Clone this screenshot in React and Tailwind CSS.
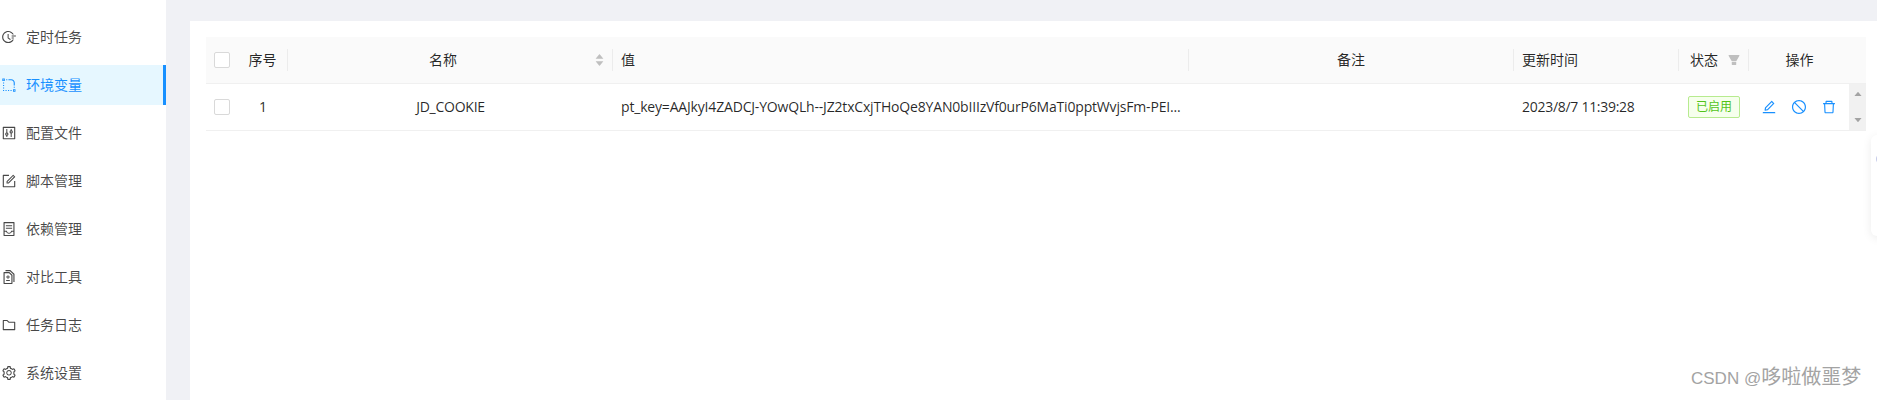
import React from "react";
import {
  AiOutlineFieldTime, AiOutlineRadiusSetting, AiOutlineControl, AiOutlineForm,
  AiOutlineContainer, AiOutlineDiff, AiOutlineFolder, AiOutlineSetting,
  AiOutlineEdit, AiOutlineStop, AiOutlineDelete, AiFillFilter, AiFillCaretUp, AiFillCaretDown,
} from "react-icons/ai";

const menu = [
  [AiOutlineFieldTime, "定时任务"],
  [AiOutlineRadiusSetting, "环境变量", true],
  [AiOutlineControl, "配置文件"],
  [AiOutlineForm, "脚本管理"],
  [AiOutlineContainer, "依赖管理"],
  [AiOutlineDiff, "对比工具"],
  [AiOutlineFolder, "任务日志"],
  [AiOutlineSetting, "系统设置"],
];

const Divider = () => <span className="w-px h-[22px] bg-[#ececec] shrink-0" />;
const Checkbox = () => <span className="block w-4 h-4 rounded-[2px] border border-[#d9d9d9] bg-white" />;

function Head({ children, center, divider = true, extra, pad = "" }) {
  return (
    <div className="flex items-center min-w-0">
      <div className={`flex-1 flex items-center min-w-0 ${center ? "justify-center" : "pl-2"} ${pad}`}>{children}</div>
      {extra}
      {divider && <Divider />}
    </div>
  );
}

export default function App() {
  return (
    <div className="relative flex h-[400px] w-[1877px] overflow-hidden bg-[#f0f1f5] text-sm text-[rgba(0,0,0,0.85)] font-['Open_Sans','Noto_Sans_CJK_SC',sans-serif]">
      <aside className="w-[166px] h-full shrink-0 bg-white pt-[17px] flex flex-col gap-2 text-[rgba(0,0,0,0.72)]">
        {menu.map(([Icon, label, active]) => (
          <div
            key={label}
            className={`h-10 flex items-center pl-[1px] gap-[9px] ${active ? "bg-[#e6f7ff] text-[#1890ff] border-r-[3px] border-[#1890ff]" : ""}`}
          >
            <Icon className="w-4 h-4 shrink-0" />
            <span>{label}</span>
          </div>
        ))}
      </aside>
      <main className="flex-1 pt-[21px] pl-6">
        <div className="h-full bg-white pt-4 pl-4 pr-[11px]">
          <div className="grid grid-cols-[32px_50px_325px_576px_325px_165px_70px_117px] h-[47px] bg-[#fafafa] border-b border-[#f0f0f0]">
            <div className="flex items-center pl-2"><Checkbox /></div>
            <Head center>序号</Head>
            <Head center pad="pl-1" extra={
              <span className="flex flex-col mr-[7px] text-[#bfbfbf] -space-y-[4px]">
                <AiFillCaretUp className="w-[11px] h-[11px]" />
                <AiFillCaretDown className="w-[11px] h-[11px]" />
              </span>
            }>名称</Head>
            <Head>值</Head>
            <Head center>备注</Head>
            <Head>更新时间</Head>
            <Head extra={<AiFillFilter className="w-[14px] h-[14px] mr-[7px] text-[#bfbfbf]" />}><span className="pl-[3px]">状态</span></Head>
            <Head center divider={false} pad="pr-4">操作</Head>
          </div>
          <div className="grid grid-cols-[32px_50px_325px_576px_325px_165px_70px_117px] h-[47px] border-b border-[#f0f0f0]">
            <div className="flex items-center pl-2"><Checkbox /></div>
            <div className="flex items-center justify-center">1</div>
            <div className="flex items-center justify-center tracking-[-0.25px]">JD_COOKIE</div>
            <div className="flex items-center pl-2 min-w-0 tracking-[-0.18px]"><span className="truncate">pt_key=AAJkyI4ZADCJ-YOwQLh--JZ2txCxjTHoQe8YAN0bIIIzVf0urP6MaTi0pptWvjsFm-PEI...</span></div>
            <div />
            <div className="flex items-center pl-2 tracking-[-0.28px]">2023/8/7 11:39:28</div>
            <div className="flex items-center pl-[9px]">
              <span className="w-[52px] h-[22px] flex items-center justify-center rounded-[2px] border border-[#b7eb8f] bg-[#f6ffed] text-xs text-[#52c41a]">已启用</span>
            </div>
            <div className="flex items-center">
              <div className="flex-1 flex items-center pl-3 gap-[14px] text-[#1890ff]">
                <AiOutlineEdit className="w-4 h-4" />
                <AiOutlineStop className="w-4 h-4" />
                <AiOutlineDelete className="w-4 h-4" />
              </div>
              <div className="w-[17px] h-full bg-[#f1f1f1] flex flex-col items-center justify-between py-[5px] text-[#a3a3a3]">
                <AiFillCaretUp className="w-[10px] h-[10px]" />
                <AiFillCaretDown className="w-[10px] h-[10px]" />
              </div>
            </div>
          </div>
        </div>
      </main>
      <div className="absolute left-[1871px] top-[135px] w-10 h-[101px] rounded-l-[6px] bg-white shadow-[0_2px_10px_rgba(0,0,0,0.08)]">
        <span className="absolute left-[5px] top-[18px] w-3 h-3 rounded-full border-2 border-[#c4c9e8]" />
      </div>
      <div className="absolute left-[1691px] top-[367px] text-[17px] text-[#a3a3a3] font-['Liberation_Sans','Noto_Sans_CJK_SC',sans-serif] whitespace-nowrap">CSDN @<span className="text-[20px] leading-none">哆啦做噩梦</span></div>
    </div>
  );
}
